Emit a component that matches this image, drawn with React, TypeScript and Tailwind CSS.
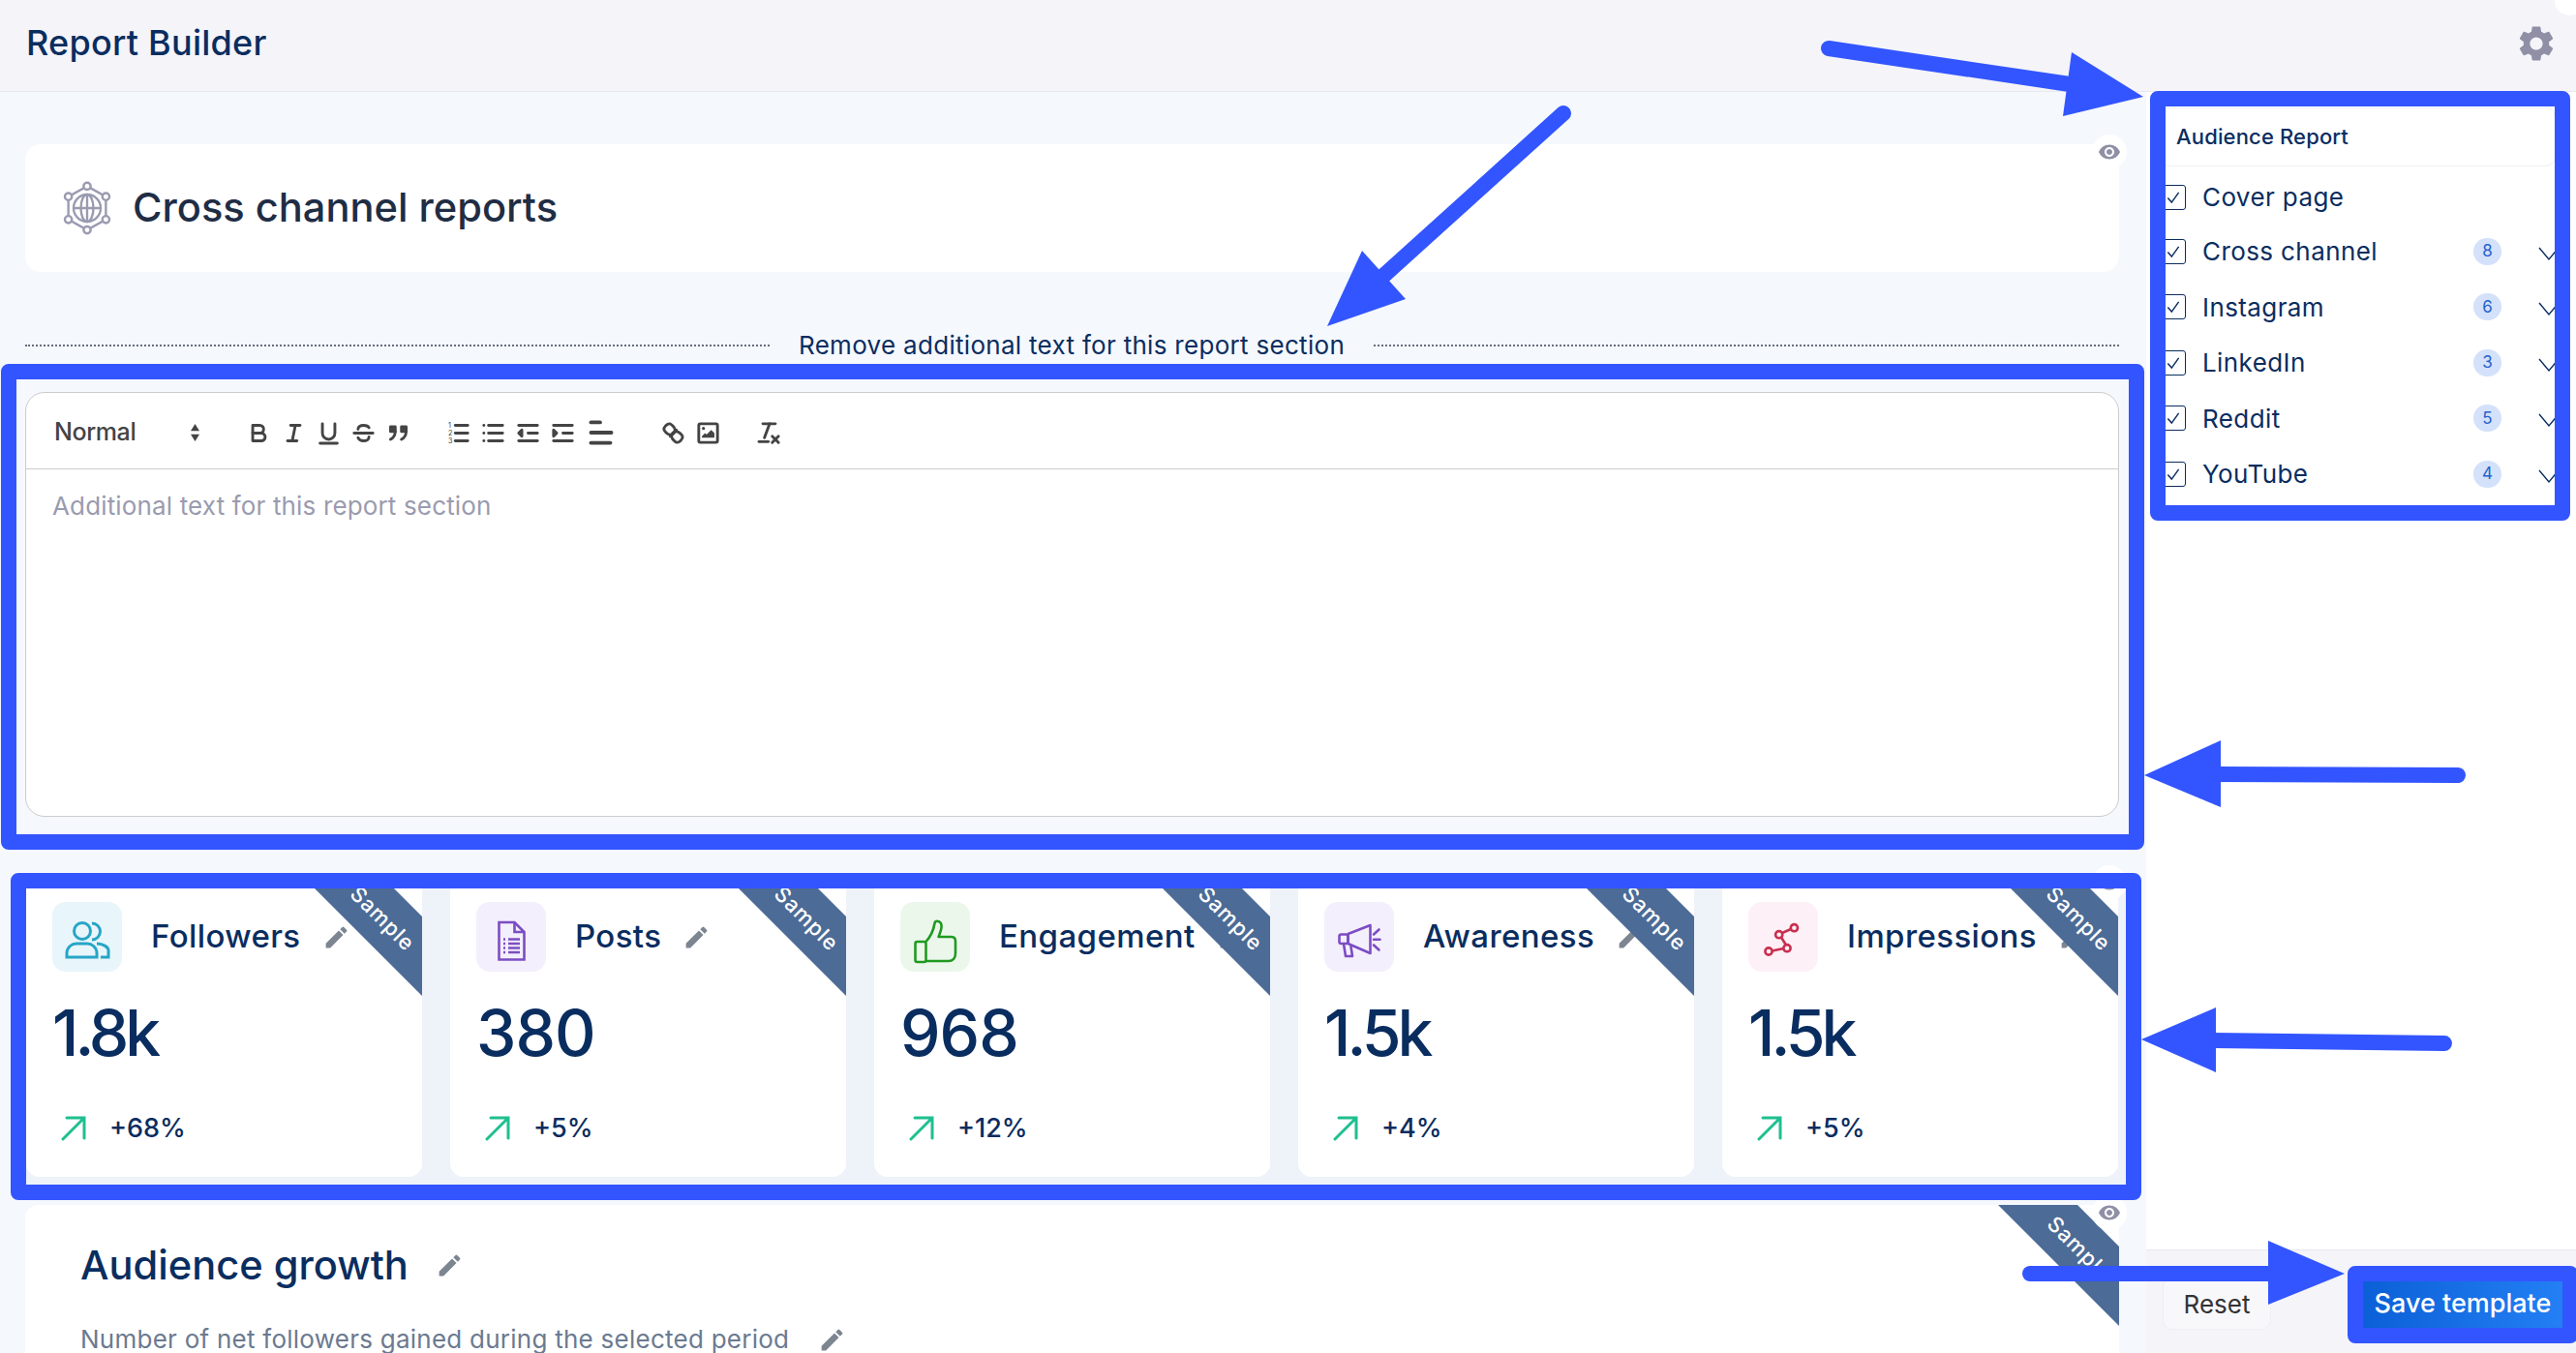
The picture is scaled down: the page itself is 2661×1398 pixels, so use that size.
import type { ReactNode } from "react";

const pencil =
  "M3 17.25V21h3.75L17.81 9.94l-3.75-3.75L3 17.25zM20.71 7.04a1 1 0 0 0 0-1.41l-2.34-2.34a1 1 0 0 0-1.41 0l-1.83 1.83 3.75 3.75 1.83-1.83z";
const eye =
  "M12 4.5C7 4.5 2.73 7.61 1 12c1.73 4.39 6 7.5 11 7.5s9.27-3.11 11-7.5c-1.73-4.39-6-7.5-11-7.5zM12 17c-2.76 0-5-2.24-5-5s2.24-5 5-5 5 2.24 5 5-2.24 5-5 5zm0-8c-1.66 0-3 1.34-3 3s1.34 3 3 3 3-1.34 3-3-1.34-3-3-3z";
const gear =
  "M19.14 12.94c.04-.3.06-.61.06-.94 0-.32-.02-.64-.07-.94l2.03-1.58c.18-.14.23-.41.12-.61l-1.92-3.32c-.12-.22-.37-.29-.59-.22l-2.39.96c-.5-.38-1.03-.7-1.62-.94l-.36-2.54c-.04-.24-.24-.41-.48-.41h-3.84c-.24 0-.43.17-.47.41l-.36 2.54c-.59.24-1.13.57-1.62.94l-2.39-.96c-.22-.08-.47 0-.59.22L2.74 8.87c-.12.21-.08.47.12.61l2.03 1.58c-.05.3-.09.63-.09.94s.02.64.07.94l-2.03 1.58c-.18.14-.23.41-.12.61l1.92 3.32c.12.22.37.29.59.22l2.39-.96c.5.38 1.03.7 1.62.94l.36 2.54c.05.24.24.41.48.41h3.84c.24 0 .44-.17.47-.41l.36-2.54c.59-.24 1.13-.56 1.62-.94l2.39.96c.22.08.47 0 .59-.22l1.92-3.32c.12-.22.07-.47-.12-.61l-2.01-1.58zM12 15.6c-1.98 0-3.6-1.62-3.6-3.6s1.62-3.6 3.6-3.6 3.6 1.62 3.6 3.6-1.62 3.6-3.6 3.6z";

function Pencil({ className = "" }: { className?: string }) {
  return (
    <svg viewBox="0 0 24 24" className={`w-[29px] h-[29px] shrink-0 fill-[#7d8591] ${className}`}>
      <path d={pencil} />
    </svg>
  );
}

function EyeButton({ className = "" }: { className?: string }) {
  return (
    <div className={`absolute right-[-8px] top-[-10px] w-[36px] h-[36px] rounded-full bg-white flex items-center justify-center ${className}`}>
      <svg viewBox="0 0 24 24" className="w-[24px] h-[24px] fill-[#8f90a6]">
        <path d={eye} />
      </svg>
    </div>
  );
}

function Ribbon() {
  return (
    <div className="absolute right-[-78px] top-[13px] w-[240px] h-[58px] rotate-45 bg-[#4c6b96] flex items-center justify-center pl-[6px] pt-[2px] text-white text-[22px] font-medium tracking-[0.8px] z-10">
      Sample
    </div>
  );
}

function QuillIcon({ children, size = "w-[29px] h-[29px]" }: { children: ReactNode; size?: string }) {
  return (
    <svg
      viewBox="0 0 18 18"
      className={`${size} fill-none stroke-[#444444] [stroke-width:1.8] [stroke-linecap:round] [stroke-linejoin:round]`}
    >
      {children}
    </svg>
  );
}

const toolBtn = "w-[36px] flex items-center justify-center";

function Toolbar() {
  return (
    <div className="h-[79px] border-b border-[#cccccc] pl-[29px] pt-[4px] flex items-center">
      <div className="w-[193px] pr-[42px] flex items-center justify-between">
        <span className="text-[25px] font-medium text-[#444444] tracking-[-0.4px]">Normal</span>
        <svg viewBox="0 0 12 20" className="w-[11px] h-[18px] fill-[#444444]">
          <path d="M6 0l5 8H1zM6 20l-5-8h10z" />
        </svg>
      </div>
      <div className={toolBtn}>
        <QuillIcon>
          <path d="M5,4H9.5A2.5,2.5,0,0,1,12,6.5v0A2.5,2.5,0,0,1,9.5,9H5V4Z" />
          <path d="M5,9h5.5A2.5,2.5,0,0,1,13,11.5v0A2.5,2.5,0,0,1,10.5,14H5V9Z" />
        </QuillIcon>
      </div>
      <div className={toolBtn}>
        <QuillIcon>
          <line x1="7" x2="13" y1="4" y2="4" />
          <line x1="5" x2="11" y1="14" y2="14" />
          <line x1="8" x2="10" y1="14" y2="4" />
        </QuillIcon>
      </div>
      <div className={toolBtn}>
        <QuillIcon>
          <path d="M5,3V9a4,4,0,0,0,4,4h0a4,4,0,0,0,4-4V3" />
          <line x1="3.5" x2="14.5" y1="15.5" y2="15.5" />
        </QuillIcon>
      </div>
      <div className={toolBtn}>
        <QuillIcon>
          <path d="M12.5 5.5C12 4.5 10.5 4 9 4 7 4 5.5 5 5.5 6.5M12.5 11.5c0 1.5-1.5 2.5-3.5 2.5-1.8 0-3-.7-3.5-2" />
          <line x1="3" x2="15" y1="9" y2="9" />
        </QuillIcon>
      </div>
      <div className={toolBtn}>
        <QuillIcon>
          <rect x="4" y="5" width="3" height="3" className="fill-[#444444]" />
          <rect x="11" y="5" width="3" height="3" className="fill-[#444444]" />
          <path d="M7,8c0,4-3,5-3,5" />
          <path d="M14,8c0,4-3,5-3,5" />
        </QuillIcon>
      </div>
      <div className={`${toolBtn} ml-[26px]`}>
        <QuillIcon>
          <line x1="7" x2="15" y1="4" y2="4" />
          <line x1="7" x2="15" y1="9" y2="9" />
          <line x1="7" x2="15" y1="14" y2="14" />
          <text x="2.5" y="5.5" fontSize="4.5" stroke="none" fill="#444444">1</text>
          <text x="2.5" y="10.5" fontSize="4.5" stroke="none" fill="#444444">2</text>
          <text x="2.5" y="15.5" fontSize="4.5" stroke="none" fill="#444444">3</text>
        </QuillIcon>
      </div>
      <div className={toolBtn}>
        <QuillIcon>
          <line x1="6" x2="15" y1="4" y2="4" />
          <line x1="6" x2="15" y1="9" y2="9" />
          <line x1="6" x2="15" y1="14" y2="14" />
          <line x1="3" x2="3" y1="4" y2="4" />
          <line x1="3" x2="3" y1="9" y2="9" />
          <line x1="3" x2="3" y1="14" y2="14" />
        </QuillIcon>
      </div>
      <div className={toolBtn}>
        <QuillIcon>
          <line x1="3" x2="15" y1="4" y2="4" />
          <line x1="9" x2="15" y1="9" y2="9" />
          <line x1="3" x2="15" y1="14" y2="14" />
          <polygon points="5 7 5 11 3 9 5 7" className="fill-[#444444]" />
        </QuillIcon>
      </div>
      <div className={toolBtn}>
        <QuillIcon>
          <line x1="3" x2="15" y1="4" y2="4" />
          <line x1="9" x2="15" y1="9" y2="9" />
          <line x1="3" x2="15" y1="14" y2="14" />
          <polygon points="3 7 3 11 5 9 3 7" className="fill-[#444444]" />
        </QuillIcon>
      </div>
      <div className="w-[43px] flex items-center justify-center">
        <QuillIcon size="w-[38px] h-[38px]">
          <line x1="4" x2="14" y1="9" y2="9" />
          <line x1="4" x2="13.5" y1="14" y2="14" />
          <line x1="4" x2="8.5" y1="4" y2="4" />
        </QuillIcon>
      </div>
      <div className={`${toolBtn} ml-[35px]`}>
        <QuillIcon>
          <line x1="7" x2="11" y1="11" y2="7" />
          <path d="M8.9,4.577a3.476,3.476,0,0,1,.36,4.679A3.476,3.476,0,0,1,4.577,8.9C3.185,7.5,2.035,6.4,4.217,4.217S7.5,3.185,8.9,4.577Z" />
          <path d="M13.423,9.1a3.476,3.476,0,0,0-4.679-.36,3.476,3.476,0,0,0,.36,4.679c1.392,1.392,2.5,2.542,4.679.36S14.815,10.5,13.423,9.1Z" />
        </QuillIcon>
      </div>
      <div className={toolBtn}>
        <QuillIcon>
          <rect x="3" y="3" width="12" height="12" rx="1" />
          <circle cx="6" cy="6" r="1" className="fill-[#444444] stroke-none" />
          <polygon points="5 12 5 11 7 9 8 10 11 7 13 9 13 12 5 12" className="fill-[#444444] stroke-none" />
        </QuillIcon>
      </div>
      <div className={`${toolBtn} ml-[27px]`}>
        <QuillIcon>
          <line x1="5" x2="13" y1="3" y2="3" />
          <line x1="6" x2="9.35" y1="12" y2="3" />
          <line x1="11" x2="15" y1="11" y2="15" />
          <line x1="15" x2="11" y1="11" y2="15" />
          <line x1="2.5" x2="8.5" y1="14.5" y2="14.5" />
        </QuillIcon>
      </div>
    </div>
  );
}

function FollowersIcon() {
  return (
    <svg viewBox="0 0 72 72" className="w-[72px] h-[72px] fill-none stroke-[#27a5c6] [stroke-width:3]">
      <circle cx="31" cy="30" r="8.5" />
      <path d="M15 57V53C15 47 20 43 25 43H36C41 43 46 47 46 53V57Z" />
      <path d="M41 22A8.5 8.5 0 0 1 41 39" />
      <path d="M46 43C53 43 58 47 58 50V57H50" />
    </svg>
  );
}

function PostsIcon() {
  return (
    <svg viewBox="0 0 72 72" className="w-[72px] h-[72px] fill-none stroke-[#7c4dc4] [stroke-width:2.6]">
      <path d="M23.5 21H39.5L49.5 31V59.5H23.5Z" />
      <path d="M39.5 21V31H49.5" />
      <path d="M33 38.5H45M33 43H45M33 47.5H45M33 52H45" />
      <path d="M28 38.5h2M28 43h2M28 47.5h2M28 52h2" />
    </svg>
  );
}

function ThumbIcon() {
  return (
    <svg viewBox="0 0 72 72" className="w-[72px] h-[72px] fill-none stroke-[#1f9a1f] [stroke-width:2.6] [stroke-linejoin:round]">
      <rect x="15.5" y="41" width="11" height="21" rx="2" />
      <path d="M26.5 41C31 36 34 31 35.5 22C36 19 40 19 42 22C44 26 41 32 39.5 36H53C56 36 57 38 57 41V53C57 58 54 61 50 61H26.5" />
    </svg>
  );
}

function MegaphoneIcon() {
  return (
    <svg viewBox="0 0 72 72" className="w-[72px] h-[72px] fill-none stroke-[#7c4dc4] [stroke-width:2.6] [stroke-linejoin:round] [stroke-linecap:round]">
      <path d="M24.5 33L47.5 24V53L24.5 43Z" />
      <rect x="15.5" y="33.5" width="9" height="9.5" rx="2" />
      <path d="M20 43L22 56H29L27.5 46" />
      <path d="M51 33.5L56.5 28.5M51 38.7H57.5M51 44.5L56.5 49.5" />
    </svg>
  );
}

function ImpressionsIcon() {
  return (
    <svg viewBox="0 0 72 72" className="w-[72px] h-[72px] fill-none stroke-[#c9304f] [stroke-width:2.6]">
      <path d="M24.5 50.5L36.5 48M34 36.5L39 44.5M35 32L44 28" />
      <circle cx="21" cy="51" r="3.6" />
      <circle cx="40" cy="47.7" r="3.6" />
      <circle cx="31.7" cy="33.7" r="3.6" />
      <circle cx="47.4" cy="26.7" r="3.6" />
    </svg>
  );
}

const stats = [
  { title: "Followers", value: "1.8k", valueClass: "tracking-[-4px]", delta: "+68%", tile: "bg-[#e8f6fb]", icon: <FollowersIcon /> },
  { title: "Posts", value: "380", valueClass: "tracking-[-1px]", delta: "+5%", tile: "bg-[#f4effc]", icon: <PostsIcon /> },
  { title: "Engagement", value: "968", valueClass: "tracking-[-1px]", delta: "+12%", tile: "bg-[#ecf7ec]", icon: <ThumbIcon /> },
  { title: "Awareness", value: "1.5k", valueClass: "tracking-[-4px]", delta: "+4%", tile: "bg-[#f4effc]", icon: <MegaphoneIcon /> },
  { title: "Impressions", value: "1.5k", valueClass: "tracking-[-4px]", delta: "+5%", tile: "bg-[#fdf0f7]", icon: <ImpressionsIcon /> },
];

const sections = [
  { name: "Cover page" },
  { name: "Cross channel", count: 8 },
  { name: "Instagram", count: 6 },
  { name: "LinkedIn", count: 3 },
  { name: "Reddit", count: 5 },
  { name: "YouTube", count: 4 },
];

function StatCard({ stat }: { stat: (typeof stats)[number] }) {
  return (
    <div className="relative h-[312px] bg-white rounded-[14px] overflow-hidden pl-[27px] pt-[28px]">
      <Ribbon />
      <div className="flex items-center">
        <div className={`w-[72px] h-[72px] rounded-[14px] shrink-0 ${stat.tile}`}>{stat.icon}</div>
        <span className="ml-[30px] mt-[-2px] text-[33px] leading-[40px] font-medium text-[#0a2d60] tracking-[0.4px] whitespace-nowrap">
          {stat.title}
        </span>
        <Pencil className="ml-[22px]" />
      </div>
      <div className={`mt-[25px] h-[76px] text-[66px] leading-[76px] font-medium text-[#0a2d60] ${stat.valueClass}`}>{stat.value}</div>
      <div className="mt-[41px] h-[40px] flex items-center pl-[9px]">
        <svg viewBox="0 0 26 26" className="w-[26px] h-[26px] fill-none stroke-[#1fbf8f] [stroke-width:3] [stroke-linecap:round]">
          <path d="M2 24L24 2M6 2H24V23" />
        </svg>
        <span className="ml-[24px] text-[27px] font-medium text-[#0a2d60]">{stat.delta}</span>
      </div>
    </div>
  );
}

function SectionRow({ name, count, first }: { name: string; count?: number; first: boolean }) {
  return (
    <div className={`flex items-center ${first ? "h-[55px] mt-[4px]" : "h-[57.5px]"}`}>
      <div className="w-[26px] h-[26px] rounded-[3px] border border-[#0a2d60] flex items-center justify-center shrink-0">
        <svg viewBox="0 0 16 16" className="w-[18px] h-[18px] fill-none stroke-[#0a2d60] [stroke-width:1.3]">
          <path d="M3 8.5L6.5 12.5L13 3.5" />
        </svg>
      </div>
      <span className="ml-[17px] text-[26px] text-[#0a2d60] tracking-[0.4px]">{name}</span>
      {count !== undefined && (
        <>
          <span className="ml-auto w-[29px] h-[28px] rounded-full bg-[#d3e1fa] text-[#2563c9] text-[17px] flex items-center justify-center">
            {count}
          </span>
          <svg viewBox="0 0 24 24" className="ml-[37px] mr-[-5px] w-[24px] h-[24px] mt-[2px] fill-none stroke-[#0a2d60] [stroke-width:1.4] shrink-0">
            <path d="M2 7L12 19L22 7" />
          </svg>
        </>
      )}
    </div>
  );
}

function Annotations() {
  return (
    <div className="absolute inset-0 z-30 pointer-events-none">
      <div className="absolute left-[2221px] top-[94px] w-[434px] h-[444px] rounded-[8px] border-[16px] border-[#3355ff]" />
      <div className="absolute left-[1px] top-[376px] w-[2214px] h-[502px] rounded-[8px] border-[16px] border-[#3355ff]" />
      <div className="absolute left-[11px] top-[902px] w-[2201px] h-[338px] rounded-[8px] border-[16px] border-[#3355ff]" />
      <div className="absolute left-[2425px] top-[1308px] w-[238px] h-[80px] rounded-[8px] border-[16px] border-[#3355ff]" />
      <svg viewBox="0 0 2661 1398" className="absolute inset-0 w-[2661px] h-[1398px] fill-[#3355ff] stroke-none">
        <line x1="1889" y1="50" x2="2138" y2="87" stroke="#3355ff" strokeWidth="16" strokeLinecap="round" />
        <polygon points="2140,54 2214,100 2131,120" />
        <line x1="1615" y1="117" x2="1428" y2="286" stroke="#3355ff" strokeWidth="16" strokeLinecap="round" />
        <polygon points="1371,337 1407,259 1452,309" />
        <line x1="2290" y1="800" x2="2539" y2="801" stroke="#3355ff" strokeWidth="16" strokeLinecap="round" />
        <polygon points="2215,801 2294,765 2294,834" />
        <line x1="2285" y1="1075" x2="2525" y2="1078" stroke="#3355ff" strokeWidth="16" strokeLinecap="round" />
        <polygon points="2212,1074 2289,1041 2289,1108" />
        <line x1="2097" y1="1316" x2="2345" y2="1316" stroke="#3355ff" strokeWidth="16" strokeLinecap="round" />
        <polygon points="2343,1282 2422,1316 2343,1348" />
      </svg>
    </div>
  );
}

export default function App() {
  return (
    <div className="relative w-[2661px] h-[1398px] overflow-hidden bg-white [font-family:Inter,sans-serif]">
      <header className="h-[95px] bg-[#f4f4f9] border-b border-[#e8e8ef] flex items-center justify-between pl-[27px] pr-[19px]">
        <h1 className="text-[36px] text-[#0a2d60] font-medium tracking-[0.25px] mt-[-6px]">Report Builder</h1>
        <svg viewBox="0 0 24 24" className="w-[44px] h-[44px] fill-[#8f90a6] mt-[-4px]">
          <path d={gear} />
        </svg>
      </header>

      <div className="flex h-[1303px]">
        <main className="w-[2217px] bg-[#f5f8fd] pl-[26px] pr-[28px] pt-[54px] overflow-hidden shrink-0">
          <section className="relative h-[132px] bg-white rounded-[16px] flex items-center pl-[36px]">
            <svg viewBox="0 0 52 52" className="w-[56px] h-[56px] fill-none stroke-[#9a9bb0] [stroke-width:2.2]">
              <path d="M26 5L44 15V37L26 47L8 37V15Z" />
              <circle cx="26" cy="26" r="13" />
              <ellipse cx="26" cy="26" rx="6" ry="13" />
              <path d="M13 26H39M26 13V39" />
              <circle cx="26" cy="5" r="3.4" className="fill-white" />
              <circle cx="44" cy="15" r="3.4" className="fill-white" />
              <circle cx="44" cy="37" r="3.4" className="fill-white" />
              <circle cx="26" cy="47" r="3.4" className="fill-white" />
              <circle cx="8" cy="37" r="3.4" className="fill-white" />
              <circle cx="8" cy="15" r="3.4" className="fill-white" />
            </svg>
            <h2 className="ml-[19px] mt-[-2px] text-[41.6px] font-medium text-[#1f2d45]">Cross channel reports</h2>
            <EyeButton />
          </section>

          <div className="mt-[56px] h-[40px] flex items-center">
            <div className="w-[769px] border-t-2 border-dotted border-[#666e80]" />
            <span className="ml-[30px] mt-[-2px] text-[26px] text-[#0a2d60] tracking-[0.3px] whitespace-nowrap">
              Remove additional text for this report section
            </span>
            <div className="flex-1 ml-[30px] border-t-2 border-dotted border-[#666e80]" />
          </div>

          <section className="mt-[28px] h-[439px] bg-white border border-[#cccccc] rounded-[20px]">
            <Toolbar />
            <div className="pl-[27px] pt-[20px] text-[26px] leading-[36px] text-[#9a9bae] tracking-[0.15px]">
              Additional text for this report section
            </div>
          </section>

          <section className="relative mt-[60px] mr-[-8px] pl-[1px] pr-[9px] pb-[8px] bg-[#eef2f9]">
            <div className="grid grid-cols-5 gap-[29px]">
              {stats.map((stat) => (
                <StatCard key={stat.title} stat={stat} />
              ))}
            </div>
            <EyeButton className="right-[0px] top-[-10px]" />
          </section>

          <section className="relative mt-[21px] h-[400px] bg-white rounded-t-[14px] pl-[57px] pt-[40px]">
            <div className="absolute inset-0 overflow-hidden">
              <Ribbon />
            </div>
            <EyeButton className="z-20" />
            <div className="flex items-center">
              <h2 className="text-[41.6px] leading-[44px] font-medium text-[#0a2d60]">Audience growth</h2>
              <Pencil className="ml-[28px]" />
            </div>
            <div className="mt-[37px] flex items-center">
              <span className="text-[26px] leading-[36px] text-[#6b7a90] tracking-[0.25px]">
                Number of net followers gained during the selected period
              </span>
              <Pencil className="ml-[30px]" />
            </div>
          </section>
        </main>

        <aside className="flex-1 flex flex-col relative">
          <div className="ml-[15px] mr-[21px] flex-1 pt-[16px]">
            <div className="h-[61px] flex items-center pl-[15px] border border-[#eeeff3] rounded-[10px] text-[22px] text-[#0a2d60] tracking-[0.15px] font-medium">
              Audience Report
            </div>
            {sections.map((s, i) => (
              <SectionRow key={s.name} name={s.name} count={s.count} first={i === 0} />
            ))}
          </div>
          <footer className="h-[107px] bg-[#f4f4f9] border-t border-[#e8e8ef] flex items-center pl-[17px]">
            <button className="w-[112px] h-[54px] mt-[4px] bg-[#f8f8fb] border border-[#efeff4] rounded-[10px] text-[26px] text-[#333333]">
              Reset
            </button>
            <button className="ml-[90px] w-[216px] h-[60px] mt-[4px] bg-gradient-to-r from-[#0a5fd6] to-[#2480f5] text-white text-[27px] font-medium">
              Save template
            </button>
          </footer>
        </aside>
      </div>

      <div className="absolute right-[-8px] top-[-14px] w-[30px] h-[30px] rounded-full bg-white" />
      <Annotations />
    </div>
  );
}
